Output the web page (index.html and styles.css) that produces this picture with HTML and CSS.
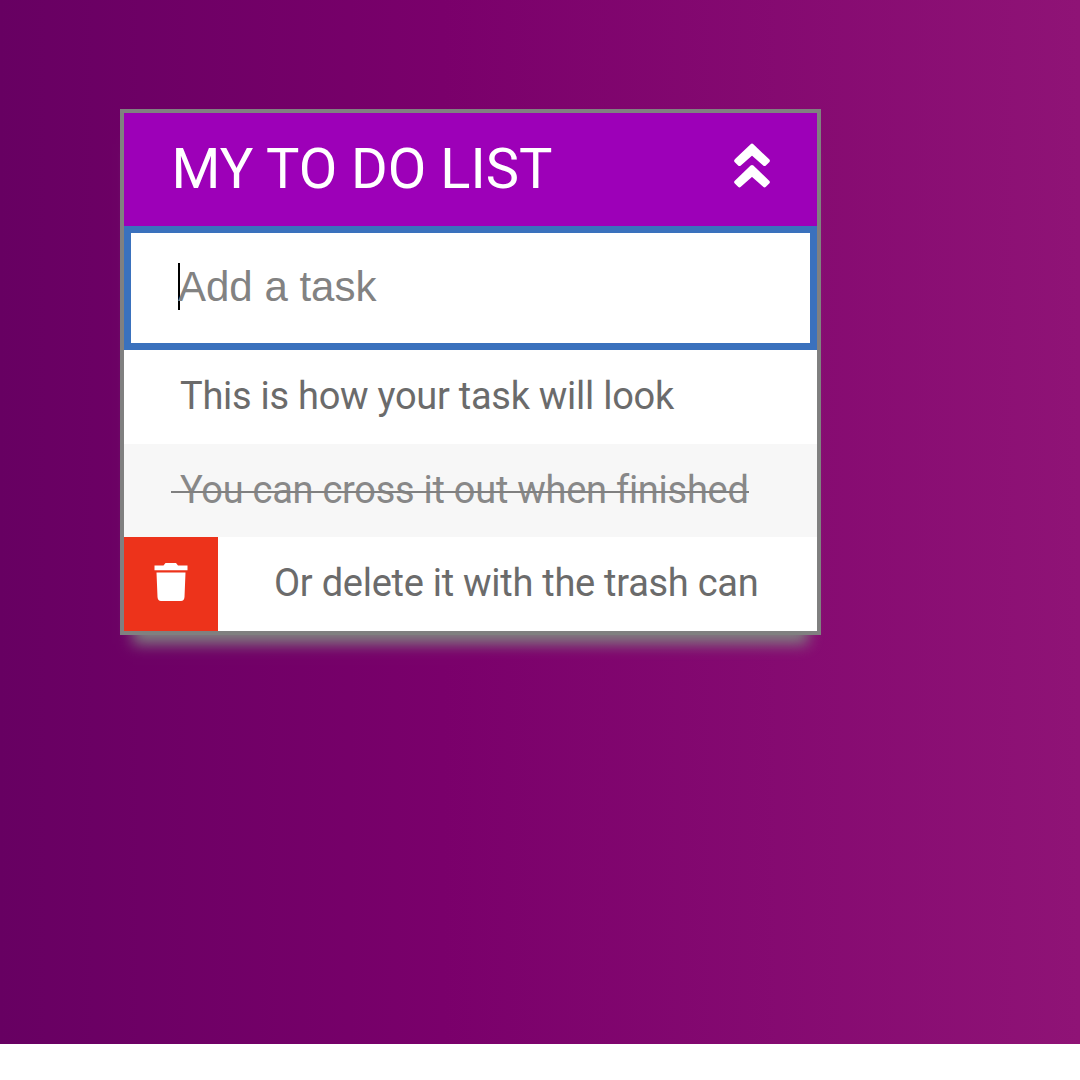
FILE: index.html
```html
<!DOCTYPE html>
<html lang="en">
<head>
<meta charset="utf-8">
<title>My To Do List</title>
<link rel="stylesheet" href="styles.css">
</head>
<body>
<main class="page">
  <section class="card">
    <header class="header">
      <h1 class="title">MY TO DO LIST</h1>
      <svg class="toggle" viewBox="0 0 36 45" fill="#fff" stroke="#fff" stroke-width="4" stroke-linejoin="round"><path d="M18 2.7 33.8 17.8 30.5 21 18 9.9 5.5 21 2.2 17.8ZM18 24 33.8 39.1 30.5 42.3 18 31.2 5.5 42.3 2.2 39.1Z"/></svg>
    </header>
    <div class="entry"><span class="caret"></span><span class="placeholder">Add a task</span></div>
    <ul class="tasks">
      <li class="task"><span class="label">This is how your task will look</span></li>
      <li class="task striped"><span class="label done">You can cross it out when finished</span></li>
      <li class="task">
        <span class="trash"><svg class="bin" viewBox="0 0 34 38" fill="#fff"><path d="M0.5 2.5H9.5L11.5 0H22L24 2.5H33.5V7.3H0.5ZM2.5 9.5H31.5L30.5 34Q30.2 38 27 38H7Q3.8 38 3.5 34Z"/></svg></span>
        <span class="label">Or delete it with the trash can</span>
      </li>
    </ul>
  </section>
</main>
</body>
</html>
```
FILE: styles.css
```css
* { box-sizing: border-box; }
body { margin: 0; background: #fff; font-family: Roboto, sans-serif; }
.page {
  height: 1044px;
  padding: 109px 0 0 120px;
  background: linear-gradient(to right, #670062 0%, #7a006b 41%, #8f1376 100%);
}
.card {
  width: 701px;
  height: 526px;
  border: 4px solid #808080;
  background: #fff;
  box-shadow: 0 22px 14px -13px #808080;
}
.header {
  display: flex;
  align-items: center;
  justify-content: space-between;
  height: 113px;
  padding: 0 47px 0 47.5px;
  background: #9d00b8;
}
.title { margin: 0; color: #fff; font-size: 56px; font-weight: 400; line-height: 115px; white-space: nowrap; }
.toggle { width: 36px; height: 45px; margin-bottom: 8px; overflow: visible; }
.entry {
  display: flex;
  align-items: center;
  height: 124px;
  padding: 0 0 3px 47px;
  border: 7px solid #3a71bd;
  font-family: "Liberation Sans", Arial, sans-serif;
  font-size: 42px;
  color: #828282;
}
.caret { width: 2px; height: 47px; margin-right: -2px; background: #000; }
.tasks { margin: 0; padding: 0; list-style: none; }
.task {
  display: flex;
  height: 93.5px;
  padding-left: 47px;
  color: #6b6b6b;
  font-size: 38px;
  letter-spacing: -0.27px;
  line-height: 92px;
  white-space: nowrap;
}
.task:last-child { padding-left: 0; }
.striped { background: #f7f7f7; }
.label { padding-left: 9px; }
.done { position: relative; color: #888; }
.done::after { content: ""; position: absolute; left: 0; right: 0; top: 47px; height: 2px; background: #808080; }
.trash { display: flex; align-items: center; justify-content: center; width: 94px; height: 94px; margin-right: 47px; background: #ed331b; }
.bin { width: 34px; height: 38px; margin-bottom: 4px; }
```
